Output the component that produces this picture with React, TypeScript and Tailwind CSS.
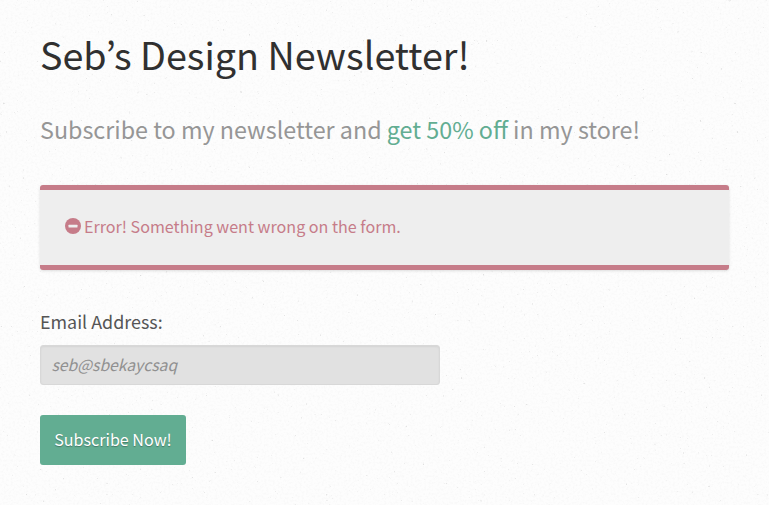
import React from 'react';

const ErrorIcon: React.FC = () => (
  <svg className="mr-[3px] h-4 w-4 shrink-0" viewBox="0 0 16 16" aria-hidden="true">
    <circle cx="8" cy="8" r="8" fill="#c67c89" />
    <rect x="3.5" y="6.7" width="9" height="2.7" rx="0.5" fill="#eeeeee" />
  </svg>
);

// Fine paper grain behind the page
const PaperTexture: React.FC = () => (
  <svg className="absolute inset-0 -z-10 h-full w-full" aria-hidden="true">
    <filter id="grain" x="0" y="0" width="100%" height="100%">
      <feTurbulence type="fractalNoise" baseFrequency="0.45" numOctaves="3" seed="8" />
      <feColorMatrix values="0 0 0 0 0.5  0 0 0 0 0.5  0 0 0 0 0.5  0.18 0 0 0 -0.078" />
    </filter>
    <filter id="specks" x="0" y="0" width="100%" height="100%">
      <feTurbulence type="fractalNoise" baseFrequency="0.35" numOctaves="2" seed="21" />
      <feColorMatrix values="0 0 0 0 0.4  0 0 0 0 0.4  0 0 0 0 0.4  2.4 0 0 0 -1.8" />
    </filter>
    <rect width="100%" height="100%" filter="url(#grain)" />
    <rect width="100%" height="100%" filter="url(#specks)" />
  </svg>
);

const App: React.FC = () => {
  return (
    <main className="relative isolate h-screen overflow-hidden bg-[#fdfdfd] px-10 pt-[29px] font-['Noto_Sans_CJK_KR',sans-serif]">
      <PaperTexture />

      <h1 className="h-[50px] whitespace-nowrap text-[37.7px] leading-[49px] text-[#303030] [font-variant-ligatures:no-common-ligatures]">
        Seb’s Design Newsletter!
      </h1>

      <h2 className="mt-[35px] h-[30px] whitespace-nowrap text-[23.3px] leading-[30px] text-[#969696]">
        <span className="[font-variant-ligatures:no-common-ligatures]">Subscribe to my newsletter and </span>
        <strong className="font-normal text-[#62ad92]">get 50% off</strong> in my store!
      </h2>

      <div className="mt-[41px] flex h-[85px] w-[689px] items-center rounded-[3px] border-y-[5px] border-[#c67c89] bg-[#eeeeee] pb-[3px] pl-[25px] text-[16.1px] text-[#c67c89] shadow-[0_1px_3px_rgba(0,0,0,0.13)]">
        <ErrorIcon />
        <span className="whitespace-nowrap">Error! Something went wrong on the form.</span>
      </div>

      <form onSubmit={(e) => e.preventDefault()}>
        <label htmlFor="email" className="mt-[39px] block h-6 text-[17.9px] leading-6 text-[#555555]">
          Email Address:
        </label>
        <input
          id="email"
          type="text"
          defaultValue="seb@sbekaycsaq"
          className="mt-3 block h-10 w-[400px] rounded-[3px] border border-[#d8d8d8] bg-[#e1e1e1] px-[10.5px] pb-0.5 text-[15.7px] text-[#909090] italic shadow-[inset_0_1px_2px_rgba(0,0,0,0.06)] outline-none"
        />
        <button
          type="submit"
          className="mt-[30px] block h-[50px] w-[146px] rounded-[3px] bg-[#62ad92] pb-0.5 text-[16.1px] whitespace-nowrap text-white [text-shadow:0_1px_1px_rgba(0,0,0,0.3)]"
        >
          Subscribe Now!
        </button>
      </form>
    </main>
  );
};

export default App;
